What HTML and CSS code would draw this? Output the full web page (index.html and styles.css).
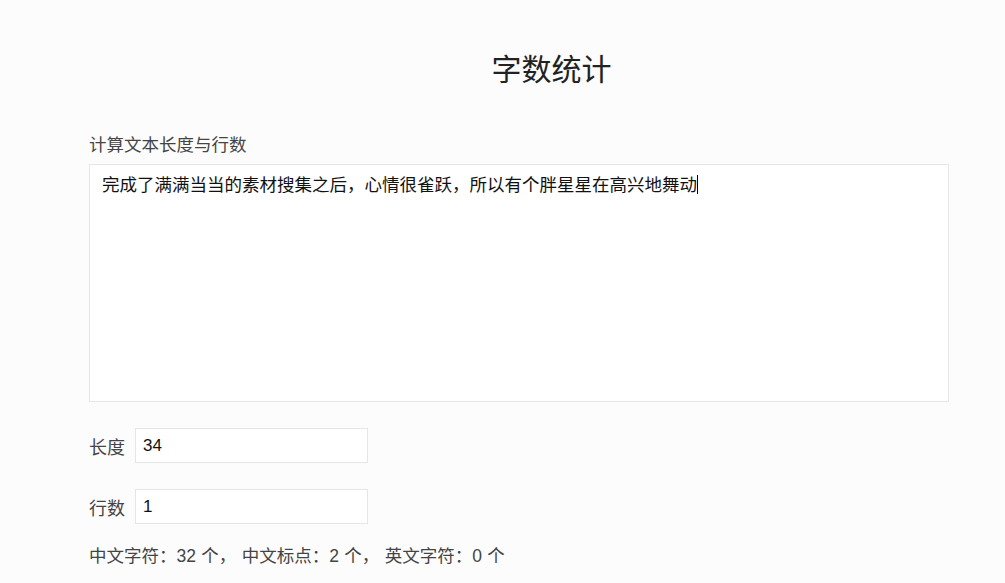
FILE: index.html
```html
<!DOCTYPE html>
<html lang="zh-CN">
<head>
    <meta charset="UTF-8">
    <meta name="viewport" content="width=device-width, initial-scale=1.0">
    <title>字数统计</title>
    <link rel="stylesheet" href="styles.css">
</head>
<body>
    <div class="page">
        <h1 class="title">字数统计</h1>
        <label class="field-label" for="source">计算文本长度与行数</label>
        <div class="text-box" id="source">完成了满满当当的素材搜集之后，心情很雀跃，所以有个胖星星在高兴地舞动<span class="caret"></span></div>
        <div class="row">
            <span class="row-label">长度</span>
            <div class="value-box">34</div>
        </div>
        <div class="row">
            <span class="row-label">行数</span>
            <div class="value-box">1</div>
        </div>
        <p class="stats">中文字符：32 个， 中文标点：2 个， 英文字符：0 个</p>
    </div>
</body>
</html>
```

FILE: styles.css
```css
body {
    margin: 0;
    background: #fcfcfc;
    font-family: "Liberation Sans", "Noto Sans CJK SC", sans-serif;
    color: #333;
}
.page {
    width: 860px;
    margin-left: 89px;
    display: flex;
    flex-direction: column;
}
.title {
    margin: 50px 0 0 65px;
    text-align: center;
    font-size: 30px;
    font-weight: normal;
    line-height: 40px;
    color: #222;
}
.field-label {
    margin-top: 42px;
    font-size: 17.5px;
    line-height: 26px;
    color: #444;
}
.text-box {
    margin-top: 6px;
    height: 214px;
    padding: 10px 12px 12px;
    background: #fff;
    border: 1px solid #e6e6e6;
    font-size: 17.5px;
    line-height: 20px;
    color: #111;
}
.caret {
    display: inline-block;
    width: 1px;
    height: 19px;
    background: #000;
    vertical-align: -3px;
}
.row {
    display: flex;
    align-items: center;
    gap: 10px;
    margin-top: 26px;
}
.row + .row {
    margin-top: 26px;
}
.row-label {
    font-size: 18px;
    color: #444;
}
.value-box {
    width: 224px;
    height: 33px;
    padding-left: 7px;
    background: #fff;
    border: 1px solid #e6e6e6;
    font-size: 17px;
    line-height: 33px;
    color: #111;
}
.stats {
    margin: 20px 0 0;
    font-size: 17.5px;
    line-height: 24px;
    word-spacing: 0.5px;
    color: #444;
}
```
